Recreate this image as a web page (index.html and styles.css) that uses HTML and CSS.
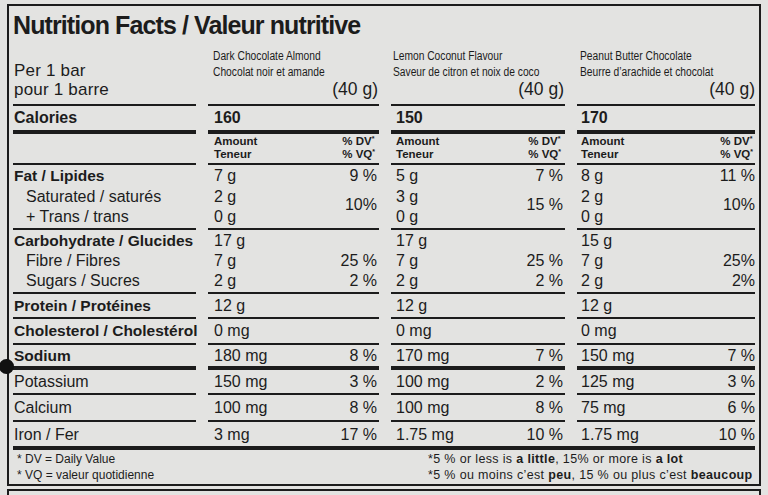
FILE: index.html
```html
<!DOCTYPE html>
<html lang="en">
<head>
<meta charset="utf-8">
<title>Nutrition Facts / Valeur nutritive</title>
<link rel="stylesheet" href="styles.css">
</head>
<body>
<div class="panel">
  <div class="grid">
    <h1 class="title">Nutrition Facts / Valeur nutritive</h1>

    <div class="c lab head"><div>Per 1 bar</div><div>pour 1 barre</div></div>
    <div class="c d k1 prod"><div class="name"><span>Dark Chocolate Almond</span></div><div class="name"><span>Chocolat noir et amande</span></div><div class="serv">(40 g)</div></div>
    <div class="c d k2 prod"><div class="name"><span>Lemon Coconut Flavour</span></div><div class="name"><span>Saveur de citron et noix de coco</span></div><div class="serv">(40 g)</div></div>
    <div class="c d k3 prod"><div class="name"><span>Peanut Butter Chocolate</span></div><div class="name"><span>Beurre d’arachide et chocolat</span></div><div class="serv">(40 g)</div></div>

    <div class="c thick lab r-cal b">Calories</div>
    <div class="c thick d k1 r-cal b">160</div>
    <div class="c thick d k2 r-cal b">150</div>
    <div class="c thick d k3 r-cal b">170</div>

    <div class="c lab r-amt"></div>
    <div class="c d k1 r-amt amt"><span>Amount</span><span class="r">% DV<span class="ast">*</span></span><span>Teneur</span><span class="r">% VQ<span class="ast">*</span></span></div>
    <div class="c d k2 r-amt amt"><span>Amount</span><span class="r">% DV<span class="ast">*</span></span><span>Teneur</span><span class="r">% VQ<span class="ast">*</span></span></div>
    <div class="c d k3 r-amt amt"><span>Amount</span><span class="r">% DV<span class="ast">*</span></span><span>Teneur</span><span class="r">% VQ<span class="ast">*</span></span></div>

    <div class="c lab r-fat"><div class="b">Fat / Lipides</div><div class="sub">Saturated / saturés</div><div class="sub">+ Trans / trans</div></div>
    <div class="c d k1 r-fat blk"><span class="v">7 g</span><span class="p">9 %</span><span class="v">2 g</span><span class="p two">10%</span><span class="v">0 g</span></div>
    <div class="c d k2 r-fat blk"><span class="v">5 g</span><span class="p">7 %</span><span class="v">3 g</span><span class="p two">15 %</span><span class="v">0 g</span></div>
    <div class="c d k3 r-fat blk"><span class="v">8 g</span><span class="p">11 %</span><span class="v">2 g</span><span class="p two">10%</span><span class="v">0 g</span></div>

    <div class="c lab r-carb"><div class="b">Carbohydrate / Glucides</div><div class="sub">Fibre / Fibres</div><div class="sub">Sugars / Sucres</div></div>
    <div class="c d k1 r-carb blk"><span class="v">17 g</span><span class="p"></span><span class="v">7 g</span><span class="p">25 %</span><span class="v">2 g</span><span class="p">2 %</span></div>
    <div class="c d k2 r-carb blk"><span class="v">17 g</span><span class="p"></span><span class="v">7 g</span><span class="p">25 %</span><span class="v">2 g</span><span class="p">2 %</span></div>
    <div class="c d k3 r-carb blk"><span class="v">15 g</span><span class="p"></span><span class="v">7 g</span><span class="p">25%</span><span class="v">2 g</span><span class="p">2%</span></div>

    <div class="c lab r-pro b">Protein / Protéines</div>
    <div class="c d k1 r-pro one"><span>12 g</span></div>
    <div class="c d k2 r-pro one"><span>12 g</span></div>
    <div class="c d k3 r-pro one"><span>12 g</span></div>

    <div class="c lab r-cho b">Cholesterol / Cholestérol</div>
    <div class="c d k1 r-cho one"><span>0 mg</span></div>
    <div class="c d k2 r-cho one"><span>0 mg</span></div>
    <div class="c d k3 r-cho one"><span>0 mg</span></div>

    <div class="c thick lab r-sod b">Sodium</div>
    <div class="c thick d k1 r-sod one"><span>180 mg</span><span>8 %</span></div>
    <div class="c thick d k2 r-sod one"><span>170 mg</span><span>7 %</span></div>
    <div class="c thick d k3 r-sod one"><span>150 mg</span><span>7 %</span></div>

    <div class="c lab r-pot">Potassium</div>
    <div class="c d k1 r-pot one"><span>150 mg</span><span>3 %</span></div>
    <div class="c d k2 r-pot one"><span>100 mg</span><span>2 %</span></div>
    <div class="c d k3 r-pot one"><span>125 mg</span><span>3 %</span></div>

    <div class="c lab r-calc">Calcium</div>
    <div class="c d k1 r-calc one"><span>100 mg</span><span>8 %</span></div>
    <div class="c d k2 r-calc one"><span>100 mg</span><span>8 %</span></div>
    <div class="c d k3 r-calc one"><span>75 mg</span><span>6 %</span></div>

    <div class="c none lab r-iron">Iron / Fer</div>
    <div class="c none d k1 r-iron one"><span>3 mg</span><span>17 %</span></div>
    <div class="c none d k2 r-iron one"><span>1.75 mg</span><span>10 %</span></div>
    <div class="c none d k3 r-iron one"><span>1.75 mg</span><span>10 %</span></div>

    <div class="rule"></div>

    <div class="note-left"><div>* DV = Daily Value</div><div>* VQ = valeur quotidienne</div></div>
    <div class="note-right"><div>*5 % or less is <b>a little</b>, 15% or more is <b>a lot</b></div><div>*5 % ou moins c’est <b>peu</b>, 15 % ou plus c’est <b>beaucoup</b></div></div>
  </div>
</div>
<div class="next"></div>
<div class="dot"></div>
</body>
</html>
```

FILE: styles.css
```css
html, body {
  margin: 0;
  padding: 0;
}
body {
  width: 768px;
  height: 495px;
  overflow: hidden;
  position: relative;
  background: #e3e3e1;
  color: #1c1c1c;
  font-family: "Liberation Sans", Arial, sans-serif;
  font-size: 16px;
}
.panel {
  margin: 4px 0 0 7px;
  width: 754px;
  height: 482px;
  box-sizing: border-box;
  border: 2px solid #1c1c1c;
  padding: 0 4px;
}
.grid {
  display: grid;
  grid-template-columns: 183px 171px 174px 178px;
  grid-template-rows: 38px 62px 28px 31px 65px 64px 25px 26px 25px 25px 27px 24px 4px 34px;
  column-gap: 12px;
}
.title {
  grid-column: 1 / -1;
  margin: 0;
  font-size: 25px;
  line-height: 38px;
  font-weight: bold;
  letter-spacing: -0.9px;
  white-space: nowrap;
}
.c {
  box-sizing: border-box;
  border-bottom: 2px solid #1c1c1c;
  white-space: nowrap;
}
.c.thick { border-bottom-width: 4px; }
.c.none { border-bottom: 0; }
.b { font-weight: bold; font-size: 15.5px; }
.lab { padding-left: 1px; }
.sub { padding-left: 12px; font-weight: normal; font-size: 16px; }

.k1 { padding-left: 6px; padding-right: 2px; }
.k2 { padding-left: 5px; padding-right: 2px; }
.k3 { padding-left: 4px; padding-right: 0; }

/* header */
.head {
  display: flex;
  flex-direction: column;
  justify-content: flex-end;
  padding-bottom: 5px;
  font-size: 17px;
  line-height: 19px;
  letter-spacing: 0.2px;
}
.prod { padding-top: 3px; }
.name {
  line-height: 16px;
  height: 16px;
  white-space: nowrap;
}
.name span {
  display: inline-block;
  font-size: 12.5px;
  transform: scaleX(0.82);
  transform-origin: left center;
}
.k1 .name { margin-left: -1.5px; }
.k2 .name { margin-left: -3px; }
.k3 .name { margin-left: -1px; }
.serv {
  margin-top: 2px;
  text-align: right;
  font-size: 17.5px;
  line-height: 17px;
  margin-right: -1px;
}
.k3 .serv { margin-right: 0; }

/* rows */
.r-cal { line-height: 24px; font-size: 16px; }
.r-amt { padding-top: 0.5px; }
.amt {
  display: grid;
  grid-template-columns: 1fr auto;
  grid-auto-rows: 13.3px;
  align-content: start;
  font-weight: bold;
  font-size: 11.5px;
  line-height: 13.3px;
  padding-right: 4px;
}
.k3.amt { padding-right: 2px; }
.ast {
  font-size: 7px;
  line-height: 0;
  position: relative;
  top: -4px;
}
.blk {
  display: grid;
  grid-template-columns: 1fr auto;
  align-content: start;
}
.blk .v { grid-column: 1; }
.blk .p { grid-column: 2; text-align: right; }
.blk .p.two { grid-row: span 2; align-self: center; margin-bottom: 4px; }
.r-fat { padding-top: 1px; line-height: 20.5px; }
.r-carb { padding-top: 0.5px; line-height: 20px; }
.one {
  display: flex;
  justify-content: space-between;
}
.r-pro { line-height: 23px; }
.r-cho { line-height: 24px; }
.r-sod { line-height: 21px; }
.r-pot { line-height: 23px; }
.r-calc { padding-top: 1px; line-height: 24px; }
.r-iron { padding-top: 1px; line-height: 23px; }

.rule {
  grid-column: 1 / -1;
  background: #1c1c1c;
}
.note-left {
  grid-column: 1 / 2;
  padding: 1px 0 0 4px;
  font-size: 12px;
  line-height: 16px;
  white-space: nowrap;
}
.note-right {
  grid-column: 3 / -1;
  padding: 1px 0 0 37px;
  font-size: 12.5px;
  letter-spacing: 0.35px;
  line-height: 16px;
  white-space: nowrap;
}
.next {
  margin: 3px 0 0 7px;
  width: 754px;
  height: 12px;
  box-sizing: border-box;
  border: 2px solid #1c1c1c;
  border-bottom: 0;
}
.dot {
  position: absolute;
  left: -1px;
  top: 359px;
  width: 15px;
  height: 15px;
  border-radius: 50%;
  background: #111;
}
```
